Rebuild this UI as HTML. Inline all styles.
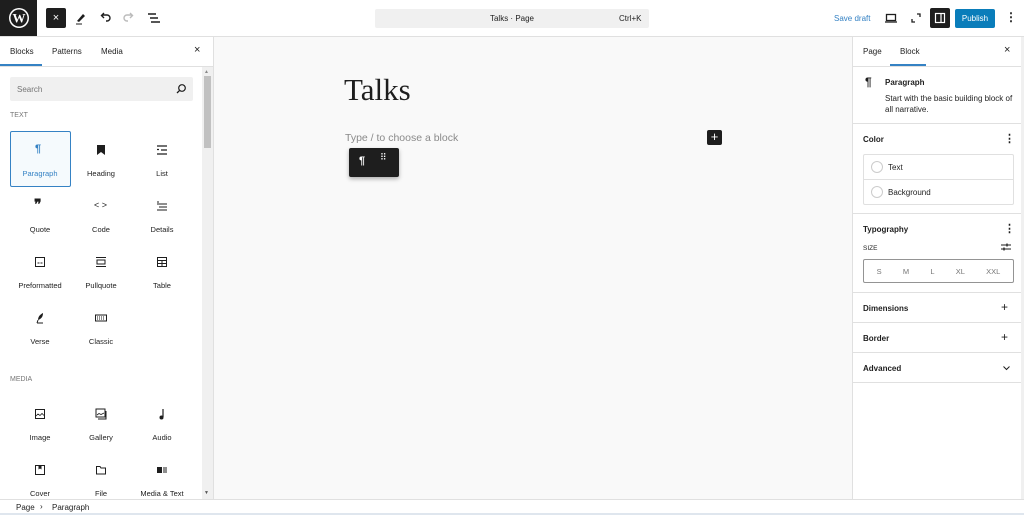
<!DOCTYPE html>
<html><head><meta charset="utf-8"><style>
*{box-sizing:border-box;margin:0;padding:0}
body{width:1024px;height:515px;overflow:hidden;background:#fff;font-family:"Liberation Sans",sans-serif;color:#1e1e1e;position:relative;font-size:8px}
.a{position:absolute}
.lbl{position:absolute;width:60px;text-align:center;font-size:7.5px;color:#1e1e1e}
.ic{position:absolute;width:14px;height:14px}
.sec{position:absolute;left:863px;font-size:8px;font-weight:bold;color:#1e1e1e}
.hr{position:absolute;left:853px;width:168px;height:1px;background:#e0e0e0}
</style></head><body>
<!-- top bar -->
<div class="a" style="left:0;top:0;width:37px;height:37px;background:#1e1e1e"></div>
<svg class="a" style="left:8px;top:7px" width="22" height="22" viewBox="0 0 22 22"><circle cx="11" cy="11" r="10" fill="#fff"/><circle cx="11" cy="11" r="8.5" fill="#1e1e1e"/><text x="11" y="15.5" text-anchor="middle" font-family="Liberation Serif" font-weight="bold" font-size="13" fill="#fff">W</text></svg>
<div class="a" style="left:46px;top:8px;width:20px;height:20px;background:#1e1e1e;border-radius:2px;color:#fff;font-size:11px;text-align:center;line-height:20px">×</div>
<svg class="a" style="left:74px;top:11px" width="14" height="14" viewBox="0 0 14 14"><path d="M3 10 L9 3 L11 5 L5 11 Z" fill="#1e1e1e"/><path d="M2 13h6" stroke="#1e1e1e"/></svg>
<svg class="a" style="left:98px;top:11px" width="14" height="14" viewBox="0 0 14 14"><path d="M4 4 H9 a3 3 0 0 1 0 6 H8 M6 2 L3.5 4.5 L6 7" fill="none" stroke="#1e1e1e" stroke-width="1.4"/></svg>
<svg class="a" style="left:122px;top:11px" width="14" height="14" viewBox="0 0 14 14"><path d="M10 4 H5 a3 3 0 0 0 0 6 H6 M8 2 L10.5 4.5 L8 7" fill="none" stroke="#bbb" stroke-width="1.4"/></svg>
<svg class="a" style="left:147px;top:11px" width="14" height="14" viewBox="0 0 14 14"><path d="M1 3h8M3 7h8M4 11h9" stroke="#1e1e1e" stroke-width="1.4"/></svg>
<div class="a" style="left:375px;top:9px;width:274px;height:19px;background:#f0f0f0;border-radius:2px"></div>
<div class="a" style="left:375px;top:14px;width:274px;text-align:center;font-size:8px;color:#1e1e1e">Talks · Page</div>
<div class="a" style="left:619px;top:14px;font-size:8px">Ctrl+K</div>
<div class="a" style="left:834px;top:14px;font-size:8px;color:#3582c4">Save draft</div>
<svg class="a" style="left:884px;top:11px" width="14" height="14" viewBox="0 0 14 14"><rect x="2.5" y="3.5" width="9" height="6" fill="none" stroke="#1e1e1e" stroke-width="1.3"/><path d="M1 11h12" stroke="#1e1e1e" stroke-width="1.3"/></svg>
<svg class="a" style="left:909px;top:11px" width="14" height="14" viewBox="0 0 14 14"><path d="M8 3h3v3M6 11H3V8" fill="none" stroke="#1e1e1e" stroke-width="1.3"/></svg>
<div class="a" style="left:930px;top:8px;width:20px;height:20px;background:#1e1e1e;border-radius:2px"></div>
<svg class="a" style="left:933px;top:11px" width="14" height="14" viewBox="0 0 14 14"><rect x="2.5" y="2.5" width="9" height="9" fill="none" stroke="#fff" stroke-width="1.2"/><path d="M8 2.5v9" stroke="#fff" stroke-width="1.2"/></svg>
<div class="a" style="left:955px;top:9px;width:40px;height:19px;background:#0a7dba;border-radius:2px;color:#fff;font-size:8px;text-align:center;line-height:19px">Publish</div>
<div class="a" style="left:1005px;top:10px;font-size:12px;line-height:14px;font-weight:bold">⋮</div>
<div class="a" style="left:0;top:36px;width:1024px;height:1px;background:#e0e0e0"></div>
<!-- left panel -->
<div class="a" style="left:10px;top:47px;font-size:8px">Blocks</div>
<div class="a" style="left:52px;top:47px;font-size:8px">Patterns</div>
<div class="a" style="left:101px;top:47px;font-size:8px">Media</div>
<div class="a" style="left:194px;top:44px;font-size:11px">×</div>
<div class="a" style="left:0;top:64px;width:42px;height:2px;background:#3582c4"></div>
<div class="a" style="left:0;top:66px;width:213px;height:1px;background:#e0e0e0"></div>
<div class="a" style="left:10px;top:77px;width:183px;height:24px;background:#f0f0f0;border-radius:2px"></div>
<div class="a" style="left:17px;top:85px;font-size:8px;color:#757575">Search</div>
<svg class="a" style="left:175px;top:83px" width="12" height="12" viewBox="0 0 12 12"><circle cx="7" cy="5" r="3.3" fill="none" stroke="#1e1e1e" stroke-width="1.2"/><path d="M4.6 7.4L2 10" stroke="#1e1e1e" stroke-width="1.3"/></svg>
<div class="a" style="left:10px;top:112px;font-size:7px;color:#757575">TEXT</div>
<div class="a" style="left:10px;top:131px;width:61px;height:56px;border:1px solid #3582c4;background:#f5fafd;border-radius:2px"></div>
<div class="a" style="left:202px;top:67px;width:11px;height:432px;background:#f0f0f0"></div>
<div class="a" style="left:204px;top:76px;width:7px;height:72px;background:#c1c1c1"></div>
<div class="a" style="left:204px;top:69px;font-size:5px;color:#888">▲</div>
<div class="a" style="left:204px;top:490px;font-size:5px;color:#555">▼</div>
<div class="a" style="left:213px;top:37px;width:1px;height:462px;background:#e0e0e0"></div>
<!-- icons text row -->
<div class="a" style="left:35px;top:143px;font-size:11px;font-weight:bold;color:#3582c4">¶</div>
<div class="lbl" style="left:10px;top:169px;color:#3582c4">Paragraph</div>
<svg class="ic" style="left:94px;top:143px" viewBox="0 0 14 14"><path d="M3 2h8v10l-4-3-4 3z" fill="#1e1e1e"/></svg>
<div class="lbl" style="left:71px;top:169px">Heading</div>
<svg class="ic" style="left:155px;top:143px" viewBox="0 0 14 14"><path d="M2 3h10M6 7h6M2 11h10M2 6.5h2" stroke="#1e1e1e" stroke-width="1.2"/></svg>
<div class="lbl" style="left:132px;top:169px">List</div>
<div class="a" style="left:34px;top:197px;font-size:14px;font-weight:bold;font-family:'Liberation Serif'">❞</div>
<div class="lbl" style="left:10px;top:225px">Quote</div>
<div class="a" style="left:94px;top:200px;font-size:9px">&lt;&nbsp;&gt;</div>
<div class="lbl" style="left:71px;top:225px">Code</div>
<svg class="ic" style="left:155px;top:199px" viewBox="0 0 14 14"><path d="M2 3h2M2 5h10M4 8h8M2 11h10" stroke="#1e1e1e" stroke-width="1.1"/></svg>
<div class="lbl" style="left:132px;top:225px">Details</div>
<svg class="ic" style="left:33px;top:255px" viewBox="0 0 14 14"><rect x="2.5" y="2.5" width="9" height="9" fill="none" stroke="#1e1e1e"/><path d="M4.5 8h2M7.5 8h2" stroke="#1e1e1e"/></svg>
<div class="lbl" style="left:10px;top:281px">Preformatted</div>
<svg class="ic" style="left:94px;top:255px" viewBox="0 0 14 14"><path d="M2 2.5h10M2 11.5h10" stroke="#1e1e1e"/><rect x="3" y="5" width="8" height="4" fill="none" stroke="#1e1e1e"/></svg>
<div class="lbl" style="left:71px;top:281px">Pullquote</div>
<svg class="ic" style="left:155px;top:255px" viewBox="0 0 14 14"><rect x="2.5" y="2.5" width="9" height="9" fill="none" stroke="#1e1e1e"/><path d="M2.5 5.5h9M2.5 8.5h9M7 5.5v6" stroke="#1e1e1e"/></svg>
<div class="lbl" style="left:132px;top:281px">Table</div>
<svg class="ic" style="left:33px;top:311px" viewBox="0 0 14 14"><path d="M5 9 C5 5 8 3 10 2 C10 6 8 8 5 9z" fill="#1e1e1e"/><path d="M4 12h6M5 9l-1 3" stroke="#1e1e1e"/></svg>
<div class="lbl" style="left:10px;top:337px">Verse</div>
<svg class="ic" style="left:94px;top:311px" viewBox="0 0 14 14"><rect x="1.5" y="4" width="11" height="6" fill="none" stroke="#1e1e1e"/><path d="M3 6h8M3 8h8" stroke="#1e1e1e" stroke-dasharray="1 1"/></svg>
<div class="lbl" style="left:71px;top:337px">Classic</div>
<div class="a" style="left:10px;top:376px;font-size:7px;color:#757575">MEDIA</div>
<svg class="ic" style="left:33px;top:407px" viewBox="0 0 14 14"><rect x="2.5" y="2.5" width="9" height="9" fill="none" stroke="#1e1e1e"/><path d="M3 9l2-2 2 1.5 2-2 2 2" fill="none" stroke="#1e1e1e" stroke-width=".8"/></svg>
<div class="lbl" style="left:10px;top:433px">Image</div>
<svg class="ic" style="left:94px;top:407px" viewBox="0 0 14 14"><rect x="2" y="2" width="9" height="8" fill="none" stroke="#1e1e1e"/><path d="M4 12h8V4" fill="none" stroke="#1e1e1e"/><path d="M3 8l2-1.5 2 1 3-1.5" fill="none" stroke="#1e1e1e" stroke-width=".8"/></svg>
<div class="lbl" style="left:71px;top:433px">Gallery</div>
<svg class="ic" style="left:155px;top:407px" viewBox="0 0 14 14"><path d="M8 2v8" stroke="#1e1e1e" stroke-width="1.2"/><circle cx="6.5" cy="10.5" r="2" fill="#1e1e1e"/></svg>
<div class="lbl" style="left:132px;top:433px">Audio</div>
<svg class="ic" style="left:33px;top:463px" viewBox="0 0 14 14"><rect x="2.5" y="2.5" width="9" height="9" fill="none" stroke="#1e1e1e"/><path d="M5.5 2.5h3v4l-1.5-1-1.5 1z" fill="#1e1e1e"/></svg>
<div class="lbl" style="left:10px;top:489px">Cover</div>
<svg class="ic" style="left:94px;top:463px" viewBox="0 0 14 14"><path d="M2.5 3.5h3.5l1 1.5h4.5v6h-9z" fill="none" stroke="#1e1e1e"/></svg>
<div class="lbl" style="left:71px;top:489px">File</div>
<svg class="ic" style="left:155px;top:463px" viewBox="0 0 14 14"><rect x="2" y="4" width="5" height="6" fill="#1e1e1e"/><path d="M8 5h4M8 7h4M8 9h4" stroke="#1e1e1e"/></svg>
<div class="lbl" style="left:132px;top:489px">Media &amp; Text</div>
<!-- canvas -->
<div class="a" style="left:214px;top:37px;width:638px;height:462px;background:#f9f9f9"></div>
<div class="a" style="left:344px;top:72px;font-family:'Liberation Serif',serif;font-size:31px;color:#1e1e1e">Talks</div>
<div class="a" style="left:345px;top:132px;font-size:10.5px;color:#8a8a8a">Type / to choose a block</div>
<div class="a" style="left:707px;top:130px;width:15px;height:15px;background:#1e1e1e;border-radius:2px;color:#fff;font-size:13px;line-height:14px;text-align:center">+</div>
<div class="a" style="left:349px;top:148px;width:50px;height:29px;background:#1e1e1e;border-radius:2px;box-shadow:0 2px 4px rgba(0,0,0,.3)"></div>
<div class="a" style="left:359px;top:155px;font-size:11px;font-weight:bold;color:#fff">¶</div>
<div class="a" style="left:380px;top:152px;font-size:9px;color:#fff;letter-spacing:-1px">⠿</div>
<!-- right panel -->
<div class="a" style="left:852px;top:37px;width:1px;height:462px;background:#e0e0e0"></div>
<div class="a" style="left:1021px;top:37px;width:3px;height:462px;background:#f0f0f0"></div>
<div class="a" style="left:863px;top:47px;font-size:8px">Page</div>
<div class="a" style="left:900px;top:47px;font-size:8px">Block</div>
<div class="a" style="left:890px;top:64px;width:36px;height:2px;background:#3582c4"></div>
<div class="a" style="left:1004px;top:44px;font-size:11px">×</div>
<div class="hr" style="top:66px"></div>
<div class="a" style="left:865px;top:75px;font-size:12px;font-weight:bold">¶</div>
<div class="a" style="left:885px;top:78px;font-size:8px;font-weight:bold">Paragraph</div>
<div class="a" style="left:885px;top:93px;width:135px;font-size:8px;line-height:11px">Start with the basic building block of all narrative.</div>
<div class="hr" style="top:123px"></div>
<div class="sec" style="top:135px">Color</div>
<div class="a" style="left:1004px;top:132px;font-size:11px;font-weight:bold">⋮</div>
<div class="a" style="left:863px;top:154px;width:151px;height:51px;border:1px solid #e0e0e0;border-radius:2px"></div>
<div class="a" style="left:864px;top:179px;width:149px;height:1px;background:#e0e0e0"></div>
<div class="a" style="left:871px;top:161px;width:12px;height:12px;border:1px solid #ccc;border-radius:50%"></div>
<div class="a" style="left:888px;top:163px;font-size:8px">Text</div>
<div class="a" style="left:871px;top:186px;width:12px;height:12px;border:1px solid #ccc;border-radius:50%"></div>
<div class="a" style="left:888px;top:188px;font-size:8px">Background</div>
<div class="hr" style="top:213px"></div>
<div class="sec" style="top:225px">Typography</div>
<div class="a" style="left:1004px;top:222px;font-size:11px;font-weight:bold">⋮</div>
<div class="a" style="left:863px;top:245px;font-size:6.5px;color:#1e1e1e">SIZE</div>
<svg class="a" style="left:1000px;top:242px" width="12" height="10" viewBox="0 0 12 10"><path d="M1 3h10M1 7h10" stroke="#1e1e1e"/><path d="M7 1.5v3M4 5.5v3" stroke="#1e1e1e" stroke-width="1.3"/></svg>
<div class="a" style="left:863px;top:259px;width:151px;height:24px;border:1px solid #949494;border-radius:2px;display:flex;justify-content:space-around;align-items:center;font-size:7.5px;color:#757575;padding:0 2px"><span>S</span><span>M</span><span>L</span><span>XL</span><span>XXL</span></div>
<div class="hr" style="top:292px"></div>
<div class="sec" style="top:304px">Dimensions</div>
<div class="a" style="left:1001px;top:300px;font-size:12px">+</div>
<div class="hr" style="top:322px"></div>
<div class="sec" style="top:334px">Border</div>
<div class="a" style="left:1001px;top:330px;font-size:12px">+</div>
<div class="hr" style="top:352px"></div>
<div class="sec" style="top:364px">Advanced</div>
<svg class="a" style="left:1002px;top:364px" width="9" height="8" viewBox="0 0 9 8"><path d="M1.5 2.5l3 3 3-3" fill="none" stroke="#1e1e1e"/></svg>
<div class="hr" style="top:382px"></div>
<!-- footer -->
<div class="a" style="left:0;top:499px;width:1024px;height:1px;background:#e0e0e0"></div>
<div class="a" style="left:16px;top:503px;font-size:8px">Page</div>
<div class="a" style="left:40px;top:502px;font-size:8px">›</div>
<div class="a" style="left:52px;top:503px;font-size:8px">Paragraph</div>
<div class="a" style="left:0;top:513px;width:1024px;height:2px;background:#dfe6ee"></div>
</body></html>
